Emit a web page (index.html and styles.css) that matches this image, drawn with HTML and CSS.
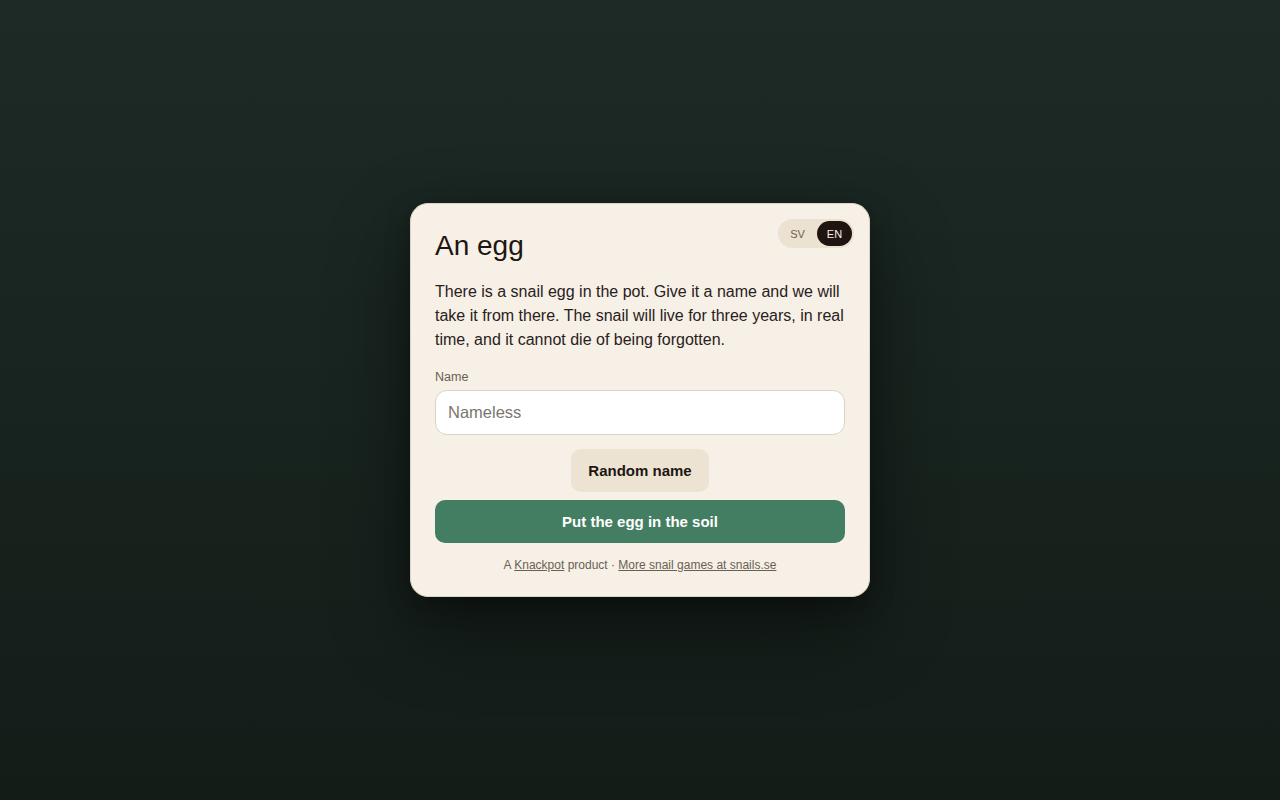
FILE: index.html
```html
<!DOCTYPE html>
<html lang="en">
<head>
<meta charset="utf-8">
<title>An egg</title>
<link rel="stylesheet" href="styles.css">
</head>
<body>
<main class="stage">
  <section class="card">
    <div class="lang">
      <button class="lang-btn">SV</button>
      <button class="lang-btn is-active">EN</button>
    </div>
    <h1 class="title">An egg</h1>
    <p class="intro">There is a snail egg in the pot. Give it a name and we will take it from there. The snail will live for three years, in real time, and it cannot die of being forgotten.</p>
    <label class="label" for="name">Name</label>
    <input class="input" id="name" type="text" placeholder="Nameless">
    <div class="row">
      <button class="btn-secondary">Random name</button>
    </div>
    <button class="btn-primary">Put the egg in the soil</button>
    <p class="footer">A <a href="#">Knackpot</a> product · <a href="#">More snail games at snails.se</a></p>
  </section>
</main>
</body>
</html>
```
FILE: styles.css
```css
* { box-sizing: border-box; }
html, body { margin: 0; height: 100%; }
body {
  font-family: "Liberation Sans", Arial, sans-serif;
  background: linear-gradient(180deg, #1d2a25 0%, #18241f 50%, #141c18 100%);
  color: #1e1612;
}
.stage {
  min-height: 100vh;
  display: flex;
  align-items: center;
  justify-content: center;
}
.card {
  position: relative;
  width: 460px;
  background: #f6f0e6;
  border: 1px solid #ddd3c4;
  border-radius: 18px;
  padding: 24px;
  display: flex;
  flex-direction: column;
  box-shadow: 0 30px 80px rgba(0, 0, 0, 0.45), 0 8px 24px rgba(0, 0, 0, 0.25);
}
.lang {
  position: absolute;
  top: 15px;
  right: 15px;
  display: flex;
  gap: 2px;
  padding: 2px;
  background: #ece2d2;
  border-radius: 999px;
}
.lang-btn {
  font-family: inherit;
  font-size: 11px;
  width: 35px;
  height: 25px;
  border: 0;
  border-radius: 999px;
  background: transparent;
  color: #6b5f55;
  padding: 0;
}
.lang-btn.is-active {
  background: #1f1410;
  color: #f6f0e6;
}
.title {
  margin: 0 0 16px;
  font-size: 28px;
  font-weight: 400;
  line-height: 36px;
  color: #1e1612;
}
.intro {
  margin: 0 0 16px;
  font-size: 16px;
  line-height: 24px;
  color: #2a211c;
}
.label {
  font-size: 12.5px;
  line-height: 18px;
  color: #6b5f55;
  margin-bottom: 4px;
}
.input {
  width: 100%;
  height: 45px;
  border: 1px solid #dcd3c8;
  border-radius: 12px;
  background: #ffffff;
  padding: 0 12px;
  font-family: inherit;
  font-size: 16.5px;
  color: #1e1612;
}
.input::placeholder { color: #7a7570; }
.row {
  display: flex;
  justify-content: center;
  margin-top: 14px;
}
.btn-secondary {
  font-family: inherit;
  font-size: 15px;
  font-weight: 700;
  height: 43px;
  padding: 0 17px;
  border: 0;
  border-radius: 10px;
  background: #ede3d3;
  color: #1e1612;
}
.btn-primary {
  margin-top: 8px;
  font-family: inherit;
  font-size: 15px;
  font-weight: 700;
  height: 43px;
  width: 100%;
  border: 0;
  border-radius: 10px;
  background: #437e62;
  color: #ffffff;
}
.footer {
  margin: 15px 0 0;
  text-align: center;
  font-size: 12px;
  line-height: 14px;
  color: #6b5f55;
}
.footer a { color: #6b5f55; text-decoration: underline; }
```
